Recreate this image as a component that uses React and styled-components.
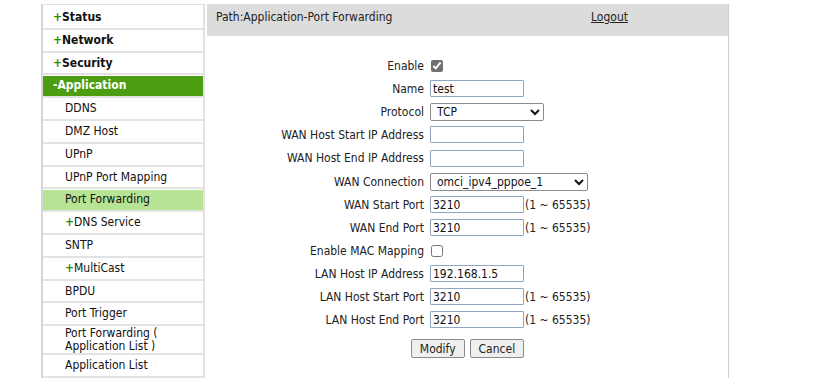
import styled, { createGlobalStyle } from "styled-components";

const GlobalStyle = createGlobalStyle`
  html, body {
    margin: 0;
    padding: 0;
    background: #fff;
  }
  body {
    font-family: Tahoma, "DejaVu Sans Condensed", "DejaVu Sans", sans-serif;
    font-size: 12px;
    color: #222;
  }
`;

const menu = [
  { label: "Status", level: 0, sign: "+" },
  { label: "Network", level: 0, sign: "+" },
  { label: "Security", level: 0, sign: "+" },
  { label: "Application", level: 0, sign: "-", open: true },
  { label: "DDNS", level: 1 },
  { label: "DMZ Host", level: 1 },
  { label: "UPnP", level: 1 },
  { label: "UPnP Port Mapping", level: 1 },
  { label: "Port Forwarding", level: 1, active: true },
  { label: "DNS Service", level: 1, sign: "+" },
  { label: "SNTP", level: 1 },
  { label: "MultiCast", level: 1, sign: "+" },
  { label: "BPDU", level: 1 },
  { label: "Port Trigger", level: 1 },
  { label: "Port Forwarding ( Application List )", level: 1, wrap: true },
  { label: "Application List", level: 1 },
];

const fields = [
  { label: "Enable", type: "check", checked: true },
  { label: "Name", type: "text", value: "test" },
  { label: "Protocol", type: "select", value: "TCP", width: 114 },
  { label: "WAN Host Start IP Address", type: "text", value: "" },
  { label: "WAN Host End IP Address", type: "text", value: "" },
  { label: "WAN Connection", type: "select", value: "omci_ipv4_pppoe_1", width: 158 },
  { label: "WAN Start Port", type: "text", value: "3210", range: true },
  { label: "WAN End Port", type: "text", value: "3210", range: true },
  { label: "Enable MAC Mapping", type: "check", checked: false },
  { label: "LAN Host IP Address", type: "text", value: "192.168.1.5" },
  { label: "LAN Host Start Port", type: "text", value: "3210", range: true },
  { label: "LAN Host End Port", type: "text", value: "3210", range: true },
];

const App = () => {
  return (
    <Page>
      <GlobalStyle />
      <Sidebar>
        {menu.map((m) => (
          <MenuRow key={m.label} $wrap={m.wrap}>
            <MenuItem $level={m.level} $open={m.open} $active={m.active} $wrap={m.wrap}>
              {m.sign && <Sign $open={m.open}>{m.sign}</Sign>}
              {m.label}
            </MenuItem>
          </MenuRow>
        ))}
      </Sidebar>
      <Main>
        <Header>
          <span>Path:Application-Port Forwarding</span>
          <Logout href="#">Logout</Logout>
        </Header>
        <Form>
          {fields.map((f) => (
            <FieldRow key={f.label}>
              <Label>{f.label}</Label>
              <Control>
                {f.type === "check" && <Check type="checkbox" defaultChecked={f.checked} />}
                {f.type === "text" && <TextInput type="text" defaultValue={f.value} />}
                {f.type === "select" && (
                  <Select defaultValue={f.value} $width={f.width}>
                    <option>{f.value}</option>
                  </Select>
                )}
                {f.range && <Range>(1 ~ 65535)</Range>}
              </Control>
            </FieldRow>
          ))}
        </Form>
        <Buttons>
          <Button>Modify</Button>
          <Button>Cancel</Button>
        </Buttons>
      </Main>
    </Page>
  );
};

const Page = styled.div`
  display: flex;
  align-items: flex-start;
  gap: 2px;
  padding: 4px 0 0 41px;
  height: 374px;
  overflow: hidden;
`;

const Sidebar = styled.ul`
  list-style: none;
  margin: 0;
  padding: 2px 0 0;
  width: 160px;
  min-height: 380px;
  border-left: 2px solid #d6d6d6;
  border-right: 2px solid #e2e2e2;
  border-top: 1px solid #e2e2e2;
`;

const MenuRow = styled.li`
  box-sizing: border-box;
  height: ${({ $wrap }) => ($wrap ? "29px" : "22.8px")};
  padding-top: 1px;
  border-bottom: 2px solid #e3e3e3;
`;

const MenuItem = styled.div`
  box-sizing: border-box;
  height: 100%;
  padding: 0 6px 0 ${({ $level }) => ($level ? "22px" : "10px")};
  line-height: ${({ $wrap }) => ($wrap ? "13px" : "19px")};
  font-weight: ${({ $level }) => ($level ? "normal" : "bold")};
  color: ${({ $open }) => ($open ? "#fff" : "#111")};
  background: ${({ $open, $active }) =>
    $open ? "#4c9d12" : $active ? "#b6e494" : "transparent"};
  white-space: ${({ $wrap }) => ($wrap ? "normal" : "nowrap")};
`;

const Sign = styled.span`
  color: ${({ $open }) => ($open ? "#fff" : "#2a8a00")};
  font-weight: bold;
`;

const Main = styled.div`
  width: 521px;
  height: 380px;
  border-right: 1px solid #cfcfcf;
`;

const Header = styled.div`
  display: flex;
  justify-content: space-between;
  align-items: flex-start;
  height: 32px;
  padding: 6px 100px 0 9px;
  box-sizing: border-box;
  background: #dcdcdc;
  color: #222;
`;

const Logout = styled.a`
  color: #222;
  text-decoration: underline;
`;

const Form = styled.div`
  display: grid;
  grid-template-rows: repeat(4, 23px) 24px repeat(7, 23px);
  margin-top: 18px;
`;

const FieldRow = styled.div`
  display: grid;
  grid-template-columns: 217px 1fr;
  column-gap: 6px;
  align-items: center;
`;

const Label = styled.span`
  text-align: right;
  white-space: nowrap;
`;

const Control = styled.div`
  display: flex;
  align-items: center;
`;

const TextInput = styled.input`
  box-sizing: border-box;
  width: 94px;
  height: 17px;
  margin: 0;
  padding: 0 2px;
  border: 1px solid #8fa6c2;
  border-radius: 1px;
  font: inherit;
  color: #111;
`;

const Select = styled.select`
  box-sizing: border-box;
  width: ${({ $width }) => $width}px;
  height: 18px;
  margin: 0;
  padding: 0 2px;
  border: 1px solid #8c8c8c;
  border-radius: 2px;
  font: inherit;
  color: #111;
  background: #fff;
`;

const Check = styled.input`
  width: 12px;
  height: 12px;
  margin: 0 0 0 1px;
  accent-color: #707070;
`;

const Range = styled.span`
  margin-left: 1px;
  white-space: nowrap;
`;

const Buttons = styled.div`
  display: flex;
  justify-content: center;
  gap: 5px;
  margin-top: 8px;
`;

const Button = styled.button`
  height: 19px;
  padding: 0 8px;
  font: inherit;
  color: #222;
  background: #efefef;
  border: 1px solid #8a8a8a;
  border-radius: 2px;
`;

export default App;
